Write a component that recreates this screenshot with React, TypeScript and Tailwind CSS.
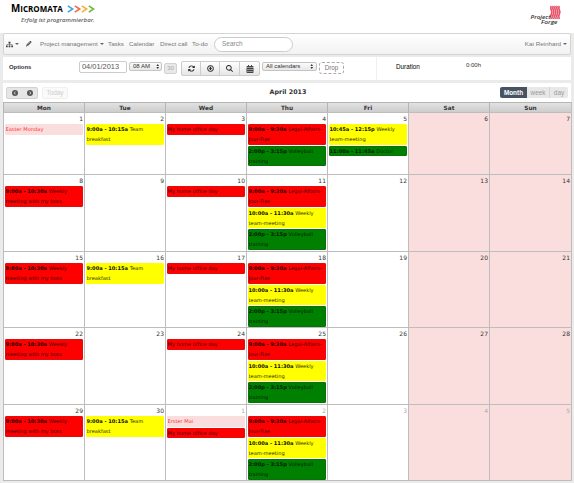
import type { ReactNode } from "react";
import { FaSitemap, FaCalendarAlt } from "react-icons/fa";
import { FaPencil, FaArrowsRotate, FaMagnifyingGlass, FaCircleChevronLeft, FaCircleChevronRight } from "react-icons/fa6";

type Kind = "red" | "yellow" | "green" | "holiday";
type CalendarEvent = { kind: Kind; time?: string; title: ReactNode; lines?: 1 | 2 };

const boss: CalendarEvent = { kind: "red", time: "9:00a - 10:30a", title: <>Weekly<br />meeting with my boss</>, lines: 2 };
const breakfast: CalendarEvent = { kind: "yellow", time: "9:00a - 10:15a", title: <>Team<br />breakfast</>, lines: 2 };
const home: CalendarEvent = { kind: "red", title: "My home office day" };
const legal: CalendarEvent = { kind: "red", time: "9:00a - 9:30a", title: <>Legal-Affairs-<br />Jour-Fixe</>, lines: 2 };
const team: CalendarEvent = { kind: "yellow", time: "10:00a - 11:30a", title: <>Weekly<br />team-meeting</>, lines: 2 };
const volley: CalendarEvent = { kind: "green", time: "2:00p - 3:15p", title: <>Volleyball<br />training</>, lines: 2 };
const thursday = [legal, team, volley];

const events: Record<number, CalendarEvent[]> = {
  0: [{ kind: "holiday", title: "Easter Monday" }],
  1: [breakfast],
  2: [home],
  3: [legal, volley],
  4: [
    { ...team, time: "10:45a - 12:15p" },
    { kind: "green", time: "11:00a - 11:45a", title: "Doctor" },
  ],
  7: [boss],
  9: [home],
  10: thursday,
  14: [boss],
  15: [breakfast],
  16: [home],
  17: thursday,
  21: [boss],
  23: [home],
  24: thursday,
  28: [boss],
  29: [breakfast],
  30: [{ kind: "holiday", title: "Erster Mai" }, home],
  31: thursday,
};

const kinds: Record<Kind, string> = {
  red: "bg-[#fe0000] text-[#3a0c0c] border-[#e60c0c]",
  yellow: "bg-[#ffff00] text-[#2c2c08] border-[#ffff00]",
  green: "bg-[#008000] text-[#061c06] border-[#0a700a]",
  holiday: "bg-[#fadede] text-[#ff3030] border-[#fadede]",
};
const timeColor: Record<Kind, string> = {
  red: "text-[#2a0000]",
  yellow: "text-[#101000]",
  green: "text-[#001c00]",
  holiday: "",
};

function EventBox({ e }: { e: CalendarEvent }) {
  return (
    <div className={`overflow-hidden whitespace-nowrap rounded-[1px] border text-[5.1px] leading-[10px] ${e.lines === 2 ? "h-[20.5px]" : "h-[10.5px]"} ${kinds[e.kind]}`}>
      <div className="-ml-[0.5px] -mt-px">
        {e.time && <b className={timeColor[e.kind]}>{e.time} </b>}
        {e.title}
      </div>
    </div>
  );
}

function Day({ i }: { i: number }) {
  const other = i >= 30;
  return (
    <div className={`border-l border-t border-[#bdbdbd] pl-px pr-[1px] ${i % 7 > 4 ? "bg-[#fadede]" : ""}`}>
      <div className={`h-[11px] text-right text-[6px] leading-[11px] ${other ? "text-[#b0a8a8]" : "text-[#333]"}`}>{other ? i - 29 : i + 1}</div>
      <div className="flex flex-col gap-[1px]">
        {(events[i] ?? []).map((e, k) => <EventBox key={k} e={e} />)}
      </div>
    </div>
  );
}

function Spinner() {
  return (
    <svg viewBox="0 0 4 6" className="h-[5px] w-[3.5px]" fill="#333">
      <path d="M2 0L3.6 2.4H.4zM2 6L.4 3.6h3.2z" />
    </svg>
  );
}

function Caret() {
  return <span className="inline-block border-x-2 border-t-2 border-x-transparent border-t-[#666]" />;
}

const chevrons = ["#4aa5dc", "#ee6a50", "#f5b335", "#74b63c"];

export default function App() {
  return (
    <div className="h-[483px] w-[574px] overflow-hidden bg-[#ebebeb] font-['Liberation_Sans',Arial,sans-serif] text-[#333]">
      <header className="flex h-[33px] justify-between bg-white pl-[11px] pr-[12px]">
        <div>
          <div className="flex h-[16px] items-center gap-[4px] pt-[2px]">
            <span className="w-[52px] whitespace-nowrap font-['Open_Sans',sans-serif] text-[9.8px] font-bold leading-[14px] text-black">M<span className="text-[8px]">ICROMATA</span></span>
            <svg viewBox="0 0 28 8" className="h-[8px] w-[28px]" fill="none" strokeWidth="1.7">
              {chevrons.map((c, k) => <path key={c} stroke={c} d={`M${0.8 + k * 7} .9L${5.6 + k * 7} 4L${0.8 + k * 7} 7.1`} />)}
            </svg>
          </div>
          <div className="whitespace-nowrap pl-[10px] font-['Open_Sans',sans-serif] text-[6.05px] font-semibold italic leading-[8px] text-[#666]">Erfolg ist programmierbar.</div>
        </div>
        <svg viewBox="0 0 33 24" className="mt-[4px] h-[24px] w-[33px]">
          <g fill="none" stroke="#e9566b" strokeWidth="1.7">
            {[0, 1, 2, 3, 4].map((k) => <path key={k} d={`M${22.3 + k * 2} 2q-1.2 2 0 4t0 4t0 5`} />)}
          </g>
          <g fontFamily="Open Sans" fontStyle="italic" fontWeight="600" fontSize="6" fill="#333">
            <text x="1.5" y="15" textLength="20" lengthAdjust="spacingAndGlyphs">Project</text>
            <text x="12" y="20" textLength="16.5" lengthAdjust="spacingAndGlyphs">Forge</text>
          </g>
        </svg>
      </header>

      <nav className="mx-[3px] flex h-[22px] items-center whitespace-nowrap rounded-[2px] border border-[#d4d4d4] bg-gradient-to-b from-white to-[#f2f2f2] text-[6.25px] text-[#777]">
        <div className="flex w-[22px] items-center gap-[2px] pl-[2px]"><FaSitemap className="size-[7px] text-[#444]" /><Caret /></div>
        <div className="w-[14px]"><FaPencil className="size-[5.5px] text-[#444]" /></div>
        <div className="flex w-[68px] items-center gap-[2px]">Project management <Caret /></div>
        <div className="w-[21px]">Tasks</div>
        <div className="w-[31px]">Calendar</div>
        <div className="w-[32px]">Direct call</div>
        <div className="w-[22px]">To-do</div>
        <div className="flex h-[15px] w-[79px] items-center rounded-full border border-[#ccc] bg-white pl-[7px] text-[6.5px] text-[#888]">Search</div>
        <div className="ml-auto flex items-center gap-[2px] pr-[3px]">Kai Reinhard <Caret /></div>
      </nav>

      <section className="mx-[3px] mt-[2px] flex h-[23px] whitespace-nowrap bg-white text-[6px]">
        <div className="flex w-[374px] border-r border-[#f0f0f0]">
          <div className="w-[76px] pl-[6px] pt-[5px] text-[5.9px] font-bold leading-[10px]">Options</div>
          <div className="mt-[4px] flex h-[12px] w-[48px] items-center rounded-[2px] border border-[#ccc] pl-[2px] text-[7.4px] text-[#555]">04/01/2013</div>
          <div className="ml-[2px] mt-[5px] flex h-[9px] w-[33px] items-center justify-between rounded-[2px] border border-[#c4c4c4] bg-gradient-to-b from-[#fafafa] to-[#e8e8e8] pl-[3px] pr-[2px]"><span>08 AM</span><Spinner /></div>
          <div className="ml-[2px] mt-[6px] flex h-[11px] w-[13px] items-center justify-center rounded-[2px] border border-[#d2d2d2] bg-[#e8e8e8] text-[#aaa]">30</div>
          <div className="ml-[4px] mt-[4px] flex h-[15px] w-[79px] rounded-[2px] border border-[#ccc] bg-gradient-to-b from-white to-[#e6e6e6] text-[#222]">
            <div className="flex w-[19px] items-center justify-center border-r border-[#ccc]"><FaArrowsRotate className="size-[7px]" /></div>
            <div className="flex w-[19px] items-center justify-center border-r border-[#ccc]">
              <svg viewBox="0 0 14 14" className="size-[7px]">
                <circle cx="7" cy="7" r="5.8" fill="none" stroke="#222" strokeWidth="2" />
                <path d="M5.7 3.5h2.6v3h2.2L7 10.5 3.5 6.5h2.2z" fill="#222" />
              </svg>
            </div>
            <div className="flex w-[20px] items-center justify-center border-r border-[#ccc]"><FaMagnifyingGlass className="size-[7px]" /></div>
            <div className="flex flex-1 items-center justify-center text-[#444]"><FaCalendarAlt className="size-[8px]" /></div>
          </div>
          <div className="ml-[2px] mt-[5px] flex h-[9px] w-[55px] items-center justify-between rounded-[2px] border border-[#c4c4c4] bg-gradient-to-b from-[#fafafa] to-[#e8e8e8] px-[3px]"><span>All calendars</span><Spinner /></div>
          <div className="ml-[2px] mt-[5px] flex h-[12px] w-[25px] items-center justify-center rounded-[3px] border border-dashed border-[#aaa] text-[6.3px] text-[#777]">Drop</div>
        </div>
        <div className="w-[89px] pl-[19px] pt-[5px] text-[6.3px] leading-[10px] text-black">Duration</div>
        <div className="pt-[3px] leading-[10px]">0:00h</div>
      </section>

      <main className="mx-[3px] mt-[3px] bg-white font-['DejaVu_Sans',Verdana,sans-serif]">
        <div className="flex h-[19px] items-start justify-between pl-[3px] pr-[3px] pt-[4px] font-['Liberation_Sans',Arial,sans-serif]">
          <div className="flex w-[100px] gap-[4px]">
            <div className="flex h-[12px] w-[32px] items-center justify-around rounded-[2px] border border-[#d2d2d2] bg-[#e6e6e6] text-[#555]"><FaCircleChevronLeft className="size-[6px]" /><FaCircleChevronRight className="size-[6px]" /></div>
            <div className="flex h-[12px] w-[26px] items-center justify-center rounded-[2px] border border-[#f0f0f0] bg-[#fafafa] text-[6.4px] text-[#ccc]">Today</div>
          </div>
          <div className="pl-[2px] font-['DejaVu_Sans',Verdana,sans-serif] text-[6.35px] font-bold leading-[10px]">April 2013</div>
          <div className="flex w-[100px] justify-end text-[6.4px] leading-[11px]">
            <div className="w-[27px] rounded-l-[2px] bg-[#475263] text-center font-bold text-white">Month</div>
            <div className="w-[23px] border-r border-[#d5d5d5] bg-[#e8e8e8] text-center text-[#999]">week</div>
            <div className="w-[18px] rounded-r-[2px] bg-[#e8e8e8] text-center text-[#999]">day</div>
          </div>
        </div>
        <div className="grid w-[569px] grid-cols-[repeat(6,81px)_82px] grid-rows-[10px_62px_77px_76px_77px_76px] border-b border-r border-[#bdbdbd]">
          {["Mon", "Tue", "Wed", "Thu", "Fri", "Sat", "Sun"].map((d) => (
            <div key={d} className="border-l border-t border-[#b5b5b5] bg-gradient-to-b from-[#e2e2e2] to-[#cdcdcd] text-center text-[5.8px] font-bold leading-[10px]">{d}</div>
          ))}
          {Array.from({ length: 35 }, (_, i) => <Day key={i} i={i} />)}
        </div>
      </main>
    </div>
  );
}
